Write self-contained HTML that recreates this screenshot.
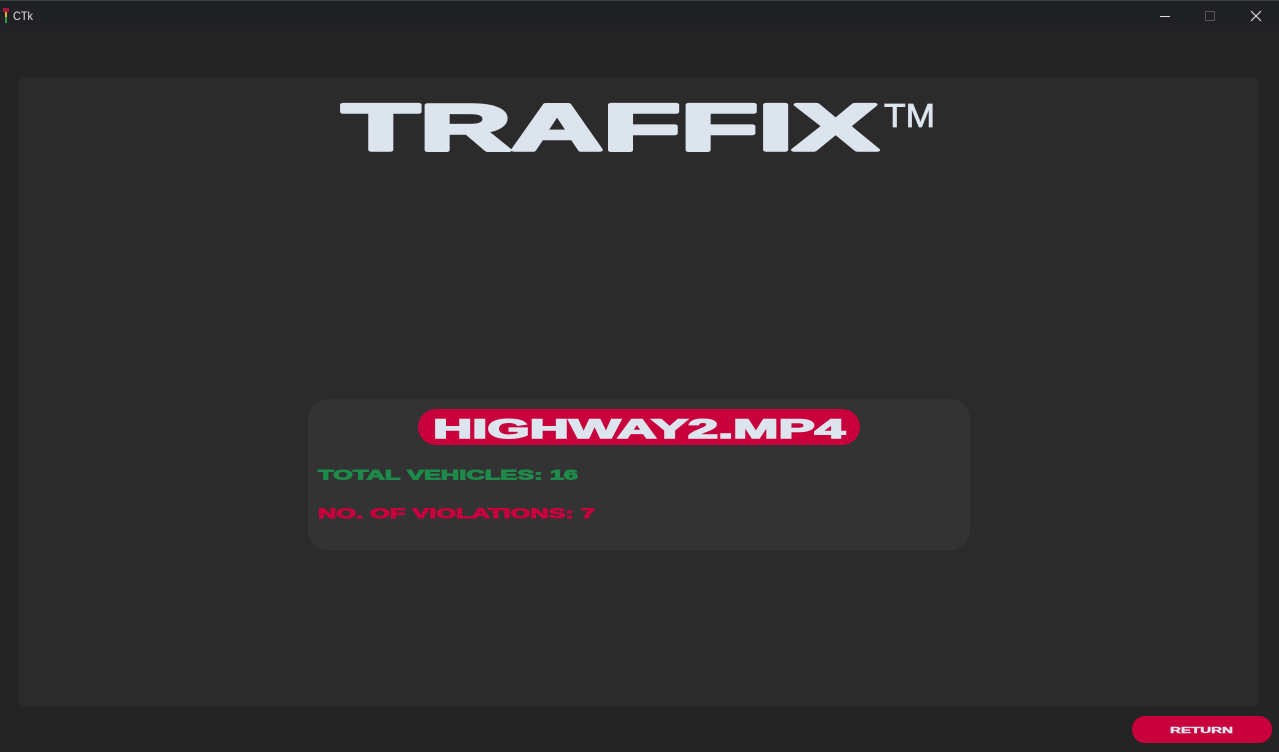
<!DOCTYPE html>
<html><head><meta charset="utf-8"><style>
html,body{margin:0;padding:0;width:1279px;height:752px;overflow:hidden;background:#242424;font-family:"Liberation Sans",sans-serif}
.abs{position:absolute}
</style></head><body>
<div class="abs" style="left:0;top:0;width:1279px;height:31px;background:#1f2124"></div>
<div class="abs" style="left:0;top:0;width:1279px;height:1px;background:#3a3d42"></div>
<svg class="abs" style="left:0;top:0" width="1279" height="752">
 <rect x="3" y="8" width="6" height="4" fill="#a0183a"/>
 <rect x="5" y="12" width="2" height="5" fill="#e8b020"/>
 <rect x="5" y="17" width="2" height="6" fill="#2a9a4a"/>
 <text x="13" y="20" font-size="12" fill="#e0e0e0" font-family="Liberation Sans" textLength="20" lengthAdjust="spacingAndGlyphs">CTk</text>
 <rect x="1160" y="16" width="10" height="1" fill="#ddd"/>
 <rect x="1205.5" y="11.5" width="9" height="9" fill="none" stroke="#555"/>
 <path d="M1251 11 L1261 21 M1261 11 L1251 21" stroke="#ddd" stroke-width="1.2"/>
 <rect x="19" y="77" width="1240" height="630" rx="6" fill="#2b2b2b"/>
 <text x="342" y="150" font-size="66" font-weight="bold" fill="#dce4ee" stroke="#dce4ee" stroke-width="3.5" stroke-linejoin="round" textLength="536" lengthAdjust="spacingAndGlyphs" font-family="Liberation Sans">TRAFFIX</text>
 <text x="884" y="127" font-size="33" fill="#dce4ee" stroke="#dce4ee" stroke-width="0.8" textLength="51" lengthAdjust="spacingAndGlyphs" font-family="Liberation Sans">TM</text>
 <rect x="308" y="399" width="662" height="151" rx="20" fill="#333333"/>
 <rect x="418" y="409" width="442" height="36" rx="18" fill="#c8003c"/>
 <text x="433" y="438" font-size="27" font-weight="bold" fill="#dce4ee" stroke="#dce4ee" stroke-width="1.5" textLength="412" lengthAdjust="spacingAndGlyphs" font-family="Liberation Sans">HIGHWAY2.MP4</text>
 <text x="318" y="479.5" font-size="14" font-weight="bold" fill="#1e8a4a" stroke="#1e8a4a" stroke-width="0.9" textLength="260" lengthAdjust="spacingAndGlyphs" font-family="Liberation Sans">TOTAL VEHICLES: 16</text>
 <text x="318" y="518" font-size="14" font-weight="bold" fill="#c8003c" stroke="#c8003c" stroke-width="0.9" textLength="277" lengthAdjust="spacingAndGlyphs" font-family="Liberation Sans">NO. OF VIOLATIONS: 7</text>
 <rect x="1132" y="716" width="140" height="27" rx="13" fill="#c8003c"/>
 <text x="1170" y="733" font-size="8" font-weight="bold" fill="#dce4ee" stroke="#dce4ee" stroke-width="0.4" textLength="63" lengthAdjust="spacingAndGlyphs" font-family="Liberation Sans">RETURN</text>
</svg>
</body></html>
